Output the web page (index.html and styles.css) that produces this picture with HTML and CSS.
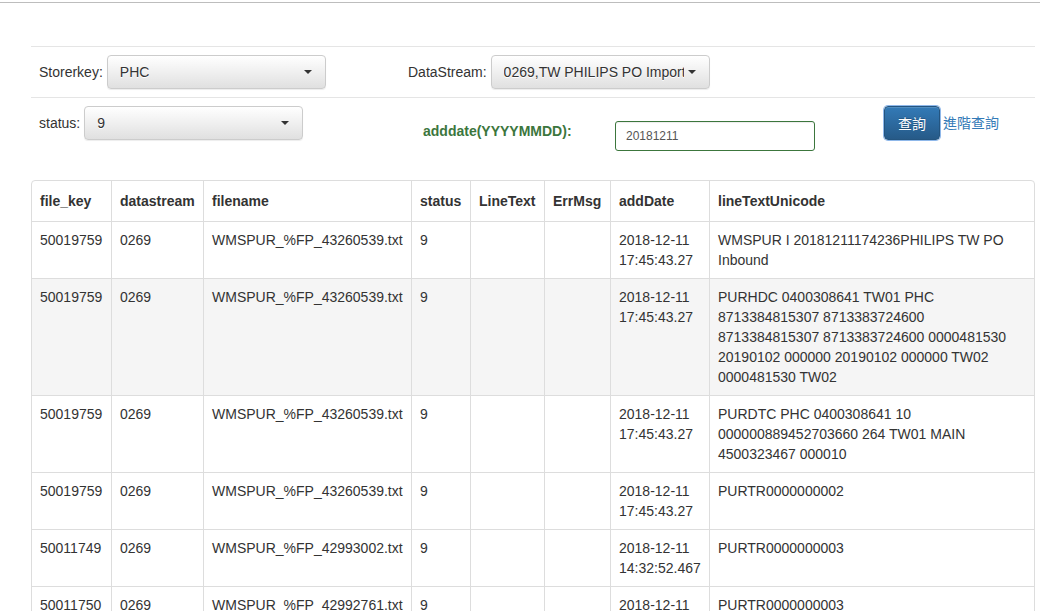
FILE: index.html
```html
<!DOCTYPE html>
<html>
<head>
<meta charset="utf-8">
<title>Query</title>
<link rel="stylesheet" href="styles.css">
</head>
<body>
<div class="topbar"></div>
<div class="container">
  <div class="rule"></div>
  <div class="form-row row1">
    <div class="grp grp-store">
      <span class="lbl">Storerkey:</span>
      <button class="dd"><span class="dd-text">PHC</span><span class="caret"></span></button>
    </div>
    <div class="grp">
      <span class="lbl">DataStream:</span>
      <button class="dd dd-tight"><span class="dd-text">0269,TW PHILIPS PO Import</span><span class="caret"></span></button>
    </div>
  </div>
  <div class="rule"></div>
  <div class="form-row row2">
    <div class="grp grp-status">
      <span class="lbl">status:</span>
      <button class="dd"><span class="dd-text">9</span><span class="caret"></span></button>
    </div>
    <label class="date-lbl">adddate(YYYYMMDD):</label>
    <input class="date-input" type="text" value="20181211">
    <button class="btn-primary">查詢</button>
    <a class="adv-link" href="#">進階查詢</a>
  </div>

  <div class="table-wrap">
    <table class="grid">
      <thead>
        <tr>
          <th class="c1">file_key</th>
          <th class="c2">datastream</th>
          <th class="c3">filename</th>
          <th class="c4">status</th>
          <th class="c5">LineText</th>
          <th class="c6">ErrMsg</th>
          <th class="c7">addDate</th>
          <th class="c8">lineTextUnicode</th>
        </tr>
      </thead>
      <tbody>
        <tr>
          <td>50019759</td><td>0269</td><td>WMSPUR_%FP_43260539.txt</td><td>9</td><td></td><td></td>
          <td>2018-12-11<br>17:45:43.27</td>
          <td>WMSPUR I 20181211174236PHILIPS TW PO<br>Inbound</td>
        </tr>
        <tr class="hover">
          <td>50019759</td><td>0269</td><td>WMSPUR_%FP_43260539.txt</td><td>9</td><td></td><td></td>
          <td>2018-12-11<br>17:45:43.27</td>
          <td>PURHDC 0400308641 TW01 PHC<br>8713384815307 8713383724600<br>8713384815307 8713383724600 0000481530<br>20190102 000000 20190102 000000 TW02<br>0000481530 TW02</td>
        </tr>
        <tr>
          <td>50019759</td><td>0269</td><td>WMSPUR_%FP_43260539.txt</td><td>9</td><td></td><td></td>
          <td>2018-12-11<br>17:45:43.27</td>
          <td>PURDTC PHC 0400308641 10<br>000000889452703660 264 TW01 MAIN<br>4500323467 000010</td>
        </tr>
        <tr>
          <td>50019759</td><td>0269</td><td>WMSPUR_%FP_43260539.txt</td><td>9</td><td></td><td></td>
          <td>2018-12-11<br>17:45:43.27</td>
          <td>PURTR0000000002</td>
        </tr>
        <tr>
          <td>50011749</td><td>0269</td><td>WMSPUR_%FP_42993002.txt</td><td>9</td><td></td><td></td>
          <td>2018-12-11<br>14:32:52.467</td>
          <td>PURTR0000000003</td>
        </tr>
        <tr>
          <td>50011750</td><td>0269</td><td>WMSPUR_%FP_42992761.txt</td><td>9</td><td></td><td></td>
          <td>2018-12-11<br>14:32:52.467</td>
          <td>PURTR0000000003</td>
        </tr>
      </tbody>
    </table>
  </div>
</div>
</body>
</html>
```
FILE: styles.css
```css
* { box-sizing: border-box; }
html, body {
  margin: 0;
  padding: 0;
  background: #fff;
}
body {
  font-family: "Liberation Sans", Arial, "Noto Sans CJK TC", sans-serif;
  font-size: 14px;
  line-height: 20px;
  color: #333;
}
.topbar {
  height: 3px;
  border-bottom: 1px solid #bdbdbd;
}
.container {
  margin-left: 31px;
  width: 1004px;
  padding-top: 43px;
}
.rule {
  height: 1px;
  background: #e5e5e5;
}
.form-row {
  display: flex;
  align-items: flex-start;
  padding-left: 8px;
}
.row1 {
  margin: 8px 0;
}
.row2 {
  margin-top: 8px;
  height: 74px;
}
.grp {
  display: flex;
  align-items: center;
}
.grp-store { width: 369px; }
.grp-status { width: 384px; }
.lbl {
  margin-right: 4px;
  white-space: nowrap;
}
.grp-store .lbl { margin-right: 4px; }
.dd {
  display: flex;
  align-items: center;
  width: 219px;
  height: 34px;
  padding: 6px 13px 6px 12px;
  font-family: inherit;
  font-size: 14px;
  line-height: 20px;
  color: #333;
  text-align: left;
  background: linear-gradient(to bottom, #fff 0, #e0e0e0 100%);
  border: 1px solid #ccc;
  border-radius: 4px;
  box-shadow: inset 0 1px 0 rgba(255,255,255,.15), 0 1px 1px rgba(0,0,0,.075);
  text-shadow: 0 1px 0 #fff;
}
.dd-text {
  flex: 1;
  overflow: hidden;
  white-space: nowrap;
}
.dd-tight .dd-text {
  flex: 0 0 180px;
  margin-right: 4px;
}
.caret {
  width: 0;
  height: 0;
  border-top: 4px solid #333;
  border-left: 4px solid transparent;
  border-right: 4px solid transparent;
}
.date-lbl {
  width: 192px;
  margin-top: 15px;
  font-weight: bold;
  color: #3c763d;
  white-space: nowrap;
}
.date-input {
  width: 200px;
  height: 30px;
  margin-top: 15px;
  margin-right: 69px;
  padding: 5px 10px;
  font-family: inherit;
  font-size: 12px;
  line-height: 18px;
  color: #555;
  border: 1px solid #3c763d;
  border-radius: 3px;
  box-shadow: inset 0 1px 1px rgba(0,0,0,.075);
  outline: none;
}
.btn-primary {
  width: 56px;
  height: 34px;
  padding: 6px 0;
  margin-right: 3px;
  font-family: "Noto Sans CJK TC", sans-serif;
  font-size: 14px;
  line-height: 20px;
  color: #fff;
  text-shadow: 0 -1px 0 rgba(0,0,0,.2);
  background: linear-gradient(to bottom, #337ab7 0, #265a88 100%);
  border: 1px solid #245580;
  border-radius: 4px;
  box-shadow: 0 0 0 1px #8fb8ea, inset 0 1px 0 rgba(255,255,255,.15);
}
.adv-link {
  margin-top: 6px;
  font-family: "Noto Sans CJK TC", sans-serif;
  font-size: 14px;
  line-height: 20px;
  color: #337ab7;
  text-decoration: none;
}
.table-wrap {
  border: 1px solid #ddd;
  border-radius: 4px;
  overflow: hidden;
}
.grid {
  width: 100%;
  border-collapse: separate;
  border-spacing: 0;
  table-layout: fixed;
}
.grid th, .grid td {
  text-align: left;
  vertical-align: top;
  padding: 8px;
  border-left: 1px solid #ddd;
  border-top: 1px solid #ddd;
  white-space: nowrap;
  overflow: hidden;
}
.grid th {
  padding: 10px 8px;
  border-top: 0;
  font-weight: bold;
}
.grid th:first-child, .grid td:first-child {
  border-left: 0;
}
.c1 { width: 79px; }
.c2 { width: 92px; }
.c3 { width: 208px; }
.c4 { width: 59px; }
.c5 { width: 74px; }
.c6 { width: 66px; }
.c7 { width: 99px; }
.c8 { width: 325px; }
.grid tr.hover td {
  background: #f5f5f5;
}
```
